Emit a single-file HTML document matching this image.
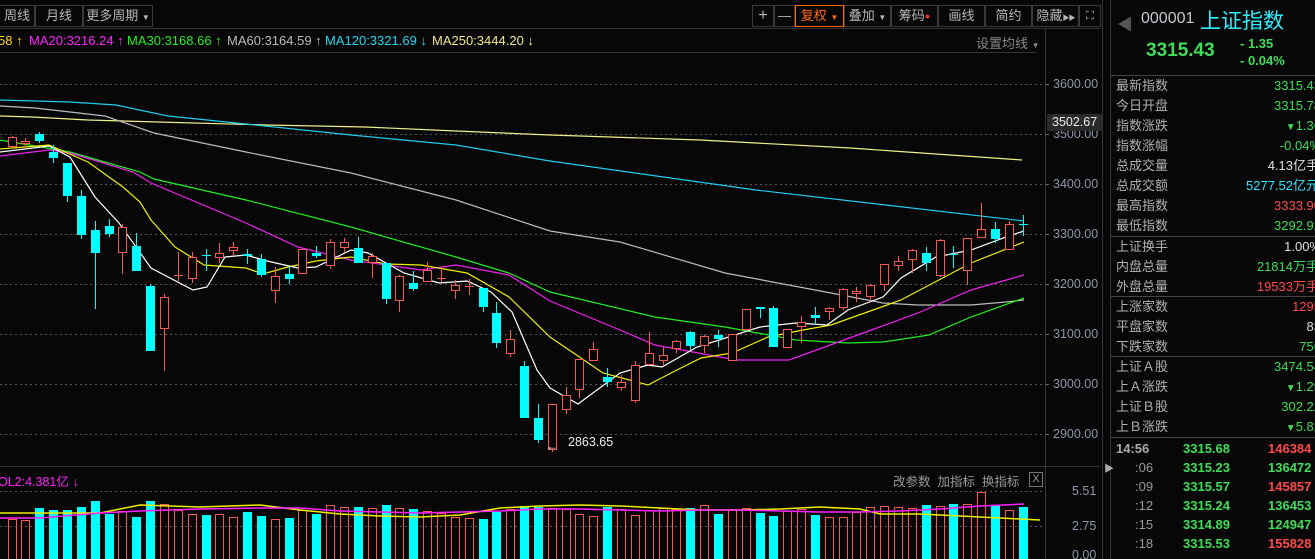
<!DOCTYPE html>
<html><head><meta charset="utf-8"><style>
*{margin:0;padding:0;box-sizing:border-box}
html,body{width:1315px;height:559px;overflow:hidden}
body{background:#070707;font-family:"Liberation Sans","Noto Sans CJK SC",sans-serif;position:relative;color:#aaa}
.a{position:absolute;white-space:nowrap}
.btn{position:absolute;top:5px;height:22px;border:1px solid #3a3a3a;color:#b8b8b8;font-size:13px;line-height:20px;text-align:center;white-space:nowrap;overflow:hidden}
.lab{position:absolute;left:1116px;font-size:13px;color:#b0b0b0;line-height:20px}
.val{position:absolute;right:-6px;font-size:13px;line-height:20px;text-align:right}
.g{color:#3fdc5a}.r{color:#ff4a4a}.w{color:#e0e0e0}.c{color:#2fe6ff}
.tk{position:absolute;font-size:13px;line-height:19px;font-weight:bold}
</style></head><body>
<svg class="a" style="left:0;top:0" width="1315" height="559" id="s">
<g stroke="#555" stroke-width="1" stroke-dasharray="2,3">
<line x1="0" y1="84.5" x2="1045" y2="84.5"/><line x1="0" y1="134.5" x2="1045" y2="134.5"/><line x1="0" y1="184.5" x2="1045" y2="184.5"/><line x1="0" y1="234.5" x2="1045" y2="234.5"/><line x1="0" y1="284.5" x2="1045" y2="284.5"/><line x1="0" y1="334.5" x2="1045" y2="334.5"/><line x1="0" y1="384.5" x2="1045" y2="384.5"/><line x1="0" y1="434.5" x2="1045" y2="434.5"/>
<line x1="0" y1="491.5" x2="1045" y2="491.5"/><line x1="0" y1="526.5" x2="1045" y2="526.5"/>
</g>
<line x1="0" y1="28.5" x2="1100" y2="28.5" stroke="#333"/>
<line x1="0" y1="52.5" x2="1036" y2="52.5" stroke="#333"/>
<line x1="0" y1="466.5" x2="1100" y2="466.5" stroke="#333"/>
<line x1="1045.5" y1="29" x2="1045.5" y2="559" stroke="#333"/>
<line x1="1102.5" y1="0" x2="1102.5" y2="559" stroke="#333"/>
<line x1="1110.5" y1="0" x2="1110.5" y2="559" stroke="#333"/>
<g stroke="#666"><line x1="1045" y1="84.5" x2="1049" y2="84.5"/><line x1="1045" y1="134.5" x2="1049" y2="134.5"/><line x1="1045" y1="184.5" x2="1049" y2="184.5"/><line x1="1045" y1="234.5" x2="1049" y2="234.5"/><line x1="1045" y1="284.5" x2="1049" y2="284.5"/><line x1="1045" y1="334.5" x2="1049" y2="334.5"/><line x1="1045" y1="384.5" x2="1049" y2="384.5"/><line x1="1045" y1="434.5" x2="1049" y2="434.5"/></g>
<g fill="none" stroke-width="1.2">
<polyline stroke="#f0f08a" points="0,116 32,117 88,120 158,122 267,125 365,127 456,131 550,135 700,140 850,148 1022,160"/>
<polyline stroke="#22ccee" points="0,100 70,102 116,105 168,116 246,124 351,135 456,145 550,161 756,190 1024,221"/>
<polyline stroke="#bbbbbb" points="0,106 35,108 105,116 154,133 246,152 351,173 456,200 550,231 620,242 725,273 831,293 883,303 918,305 971,305 1006,302 1024,300"/>
<polyline stroke="#22ee22" points="0,140 70,152 140,172 154,179 246,200 351,227 456,257 509,273 550,292 655,317 725,327 796,340 848,343 883,342 929,335 971,317 1024,298"/>
<polyline stroke="#ee22ee" points="0,156 49,150 70,153 133,172 151,183 246,223 298,247 351,260 421,270 456,265 509,275 550,301 620,330 655,345 736,360 789,360 866,332 918,313 971,290 1024,275"/>
<polyline stroke="#eeee00" points="0,149 49,145 88,162 123,187 140,202 151,220 175,247 204,265 246,268 263,274 288,267 316,261 351,257 386,264 421,265 467,273 509,297 550,337 603,373 648,385 673,372 701,358 732,353 768,337 803,330 831,325 901,300 971,263 1024,242"/>
<polyline stroke="#ffffff" points="0,152 49,146 70,157 95,197 119,223 151,268 193,290 207,287 225,257 246,255 267,261 298,268 316,267 351,250 368,253 404,273 439,283 467,281 491,292 512,312 537,370 550,388 578,404 620,373 648,365 662,367 697,347 760,327 796,323 827,325 848,310 883,297 901,278 936,257 971,250 1006,237 1024,231"/>
</g>
<g id="cd"></g><g id="vol"></g>
<g fill="none" stroke-width="1.5">
<polyline stroke="#eeee00" points="0,513 40,513 100,513 140,505 200,507 260,505 300,510 340,514 380,516 420,517 460,515 500,508 540,506 580,505 620,506 660,508 700,510 740,510 780,509 820,507 860,509 880,514 920,514 960,516 1000,518 1040,520"/>
<polyline stroke="#ff22ff" points="0,518 40,518 100,513 140,511 200,509 260,508 300,508 340,511 380,512 420,513 460,512 500,511 540,509 580,509 620,510 660,511 700,510 740,510 780,511 820,512 860,512 900,511 940,509 980,506 1024,504"/>
</g>
<text x="546" y="450" fill="#eee" font-size="12" font-family="Liberation Sans">←</text>
<text x="568" y="446" fill="#eee" font-size="12.5" font-family="Liberation Sans">2863.65</text>
</svg>
<script>
var C=[[1,137,147,136,148],[1,141,144,138,147],[0,134,141,132,143],[0,152,158,145,163],[0,163,196,163,202],[0,196,235,190,239],[0,230,253,221,309],[0,226,234,219,237],[1,227,253,224,274],[0,246,271,233,271],[0,286,351,284,351],[1,297,329,294,371],[1,275,275,252,281],[1,257,279,252,283],[0,255,255,249,271],[1,253,258,243,263],[1,247,251,242,256],[0,254,256,249,264],[0,259,275,254,277],[1,276,291,267,303],[0,274,279,267,284],[1,249,274,249,274],[0,253,256,246,258],[1,242,266,239,269],[1,242,248,238,253],[0,248,263,237,263],[1,256,263,253,278],[0,263,299,263,304],[1,276,301,275,312],[0,283,289,271,291],[1,270,282,262,282],[1,278,278,267,282],[1,285,291,280,299],[1,286,286,279,295],[0,288,307,288,312],[0,313,343,302,348],[1,339,354,330,357],[0,366,418,361,418],[0,418,440,404,443],[1,404,450,404,452],[1,395,410,387,414],[1,359,390,359,398],[1,349,361,342,361],[0,377,382,368,387],[1,382,388,375,391],[1,365,401,361,403],[1,353,365,332,365],[1,355,361,347,366],[1,341,349,340,353],[0,332,346,331,350],[1,336,346,335,353],[0,335,339,330,347],[1,334,361,334,361],[1,309,330,309,330],[0,307,309,307,318],[0,308,347,306,347],[1,329,348,329,348],[1,322,327,316,343],[0,315,318,307,325],[1,308,312,307,320],[1,289,308,288,310],[1,291,294,287,302],[1,285,297,284,301],[1,264,285,264,291],[1,261,266,256,271],[1,250,260,249,273],[0,253,263,247,271],[1,240,276,239,277],[0,254,254,246,268],[1,238,271,238,285],[1,229,238,203,238],[0,229,239,222,243],[1,224,250,221,250],[0,224,224,215,236]];
var V=[519,520,508,510,510,507,501,514,511,517,501,504,510,514,515,514,517,512,516,519,518,510,514,505,507,507,508,505,508,509,511,513,517,518,519,512,509,506,507,508,509,514,516,507,509,515,510,508,509,508,505,514,509,508,513,516,511,509,515,517,517,512,507,506,507,508,505,506,504,504,492,505,510,507];
var ns="http://www.w3.org/2000/svg",cd=document.getElementById('cd'),vo=document.getElementById('vol');
function el(p,t,a){var e=document.createElementNS(ns,t);for(var k in a)e.setAttribute(k,a[k]);p.appendChild(e);}
C.forEach(function(c,i){var x=Math.round(11.6+i*13.85),col=c[0]?'#f65a50':'#00ffff';
el(cd,'line',{x1:x+.5,x2:x+.5,y1:c[3],y2:c[4],stroke:col});
if(c[2]-c[1]<1){el(cd,'line',{x1:x-4,x2:x+5,y1:c[1]+.5,y2:c[1]+.5,stroke:col});}
else if(c[0]){el(cd,'rect',{x:x-3.5,y:c[1]+.5,width:8,height:c[2]-c[1]-1,fill:'#070707',stroke:col});}
else{el(cd,'rect',{x:x-4,y:c[1],width:9,height:c[2]-c[1],fill:col});}
var t=V[i];if(c[0])el(vo,'rect',{x:x-3.5,y:t+.5,width:8,height:559-t,fill:'none',stroke:'#f65a50'});else el(vo,'rect',{x:x-4,y:t,width:9,height:559-t,fill:'#00ffff'});
});
</script>
<div class="btn" style="left:-1px;width:36px">周线</div>
<div class="btn" style="left:35px;width:48px">月线</div>
<div class="btn" style="left:83px;width:70px">更多周期 <span style="font-size:8px">▼</span></div>
<div class="btn" style="left:752px;width:22px;font-size:16px">+</div>
<div class="btn" style="left:774px;width:21px">—</div>
<div class="btn" style="left:795px;width:49px;border-color:#ff6a00;color:#ff6a1a">复权 <span style="font-size:8px">▼</span></div>
<div class="btn" style="left:844px;width:47px">叠加 <span style="font-size:8px">▼</span></div>
<div class="btn" style="left:891px;width:47px">筹码<span style="color:#ff3030;font-size:9px;vertical-align:top">●</span></div>
<div class="btn" style="left:938px;width:47px">画线</div>
<div class="btn" style="left:985px;width:47px">简约</div>
<div class="btn" style="left:1032px;width:47px">隐藏<span style="font-size:7px;letter-spacing:-1px">▶▶</span></div>
<div class="btn" style="left:1079px;width:22px;font-size:11px">⛶</div>
<div class="a" style="left:0;top:33px;font-size:13px;line-height:16px">
<span style="color:#ffd700;position:absolute;left:-2px">58 ↑</span>
<span style="color:#ff22ff;position:absolute;left:29px">MA20:3216.24 ↑</span>
<span style="color:#22ee22;position:absolute;left:127px">MA30:3168.66 ↑</span>
<span style="color:#bbb;position:absolute;left:227px">MA60:3164.59 ↑</span>
<span style="color:#22d8f0;position:absolute;left:325px">MA120:3321.69 ↓</span>
<span style="color:#f0e890;position:absolute;left:432px">MA250:3444.20 ↓</span>
</div>
<div class="a" style="left:976px;top:33px;font-size:13px;color:#888">设置均线 <span style="font-size:8px">▼</span></div>
<div class="a" style="left:1053px;top:76px;font-size:12.5px;color:#8d97a8;line-height:16px">3600.00</div>
<div class="a" style="left:1053px;top:126px;font-size:12.5px;color:#8d97a8;line-height:16px">3500.00</div>
<div class="a" style="left:1047px;top:114px;width:55px;height:17px;background:#2a2a2a;font-size:12.5px;color:#eee;line-height:17px;padding-left:5px">3502.67</div>
<div class="a" style="left:1053px;top:176px;font-size:12.5px;color:#8d97a8;line-height:16px">3400.00</div>
<div class="a" style="left:1053px;top:226px;font-size:12.5px;color:#8d97a8;line-height:16px">3300.00</div>
<div class="a" style="left:1053px;top:276px;font-size:12.5px;color:#8d97a8;line-height:16px">3200.00</div>
<div class="a" style="left:1053px;top:326px;font-size:12.5px;color:#8d97a8;line-height:16px">3100.00</div>
<div class="a" style="left:1053px;top:376px;font-size:12.5px;color:#8d97a8;line-height:16px">3000.00</div>
<div class="a" style="left:1053px;top:426px;font-size:12.5px;color:#8d97a8;line-height:16px">2900.00</div>
<div class="a" style="left:1072px;top:483px;font-size:12.5px;color:#8d97a8;line-height:16px">5.51</div>
<div class="a" style="left:1072px;top:518px;font-size:12.5px;color:#8d97a8;line-height:16px">2.75</div>
<div class="a" style="left:1072px;top:547px;font-size:12.5px;color:#8d97a8;line-height:16px">0.00</div>
<div class="a" style="left:-2px;top:471px;font-size:12.5px;color:#ff22ff">OL2:4.381亿 ↓</div>
<div class="a" style="left:893px;top:471px;font-size:12.5px;color:#999">改参数&nbsp; 加指标&nbsp; 换指标</div>
<div class="a" style="left:1029px;top:472px;width:14px;height:15px;border:1px solid #777;color:#999;font-size:11px;line-height:13px;text-align:center">X</div>
<div class="a" style="left:1117px;top:11px;font-size:16px;color:#555">◀</div>
<div class="a" style="left:1141px;top:10px;font-size:16px;color:#c8c8d0">000001</div>
<div class="a" style="left:1200px;top:5px;font-size:21px;color:#2ff0ff">上证指数</div>
<div class="a" style="left:1146px;top:40px;font-size:19px;font-weight:bold;color:#3fdc5a">3315.43</div>
<div class="a" style="left:1240px;top:36px;font-size:13px;font-weight:bold;color:#3fdc5a">- 1.35</div>
<div class="a" style="left:1240px;top:53px;font-size:13px;font-weight:bold;color:#3fdc5a">- 0.04%</div>
<div class="a" style="left:1111px;top:75px;width:204px;height:1px;background:#444"></div>
<div class="a" style="left:1111px;top:236px;width:204px;height:1px;background:#444"></div>
<div class="a" style="left:1111px;top:296px;width:204px;height:1px;background:#444"></div>
<div class="a" style="left:1111px;top:356px;width:204px;height:1px;background:#444"></div>
<div class="a" style="left:1111px;top:437px;width:204px;height:1px;background:#444"></div>
<div class="a" style="left:1104px;top:460px;font-size:10px;color:#aaa">▶</div>
<div class="lab" style="top:76px">最新指数</div><div class="val g" style="top:76px">3315.43</div>
<div class="lab" style="top:96px">今日开盘</div><div class="val g" style="top:96px">3315.78</div>
<div class="lab" style="top:116px">指数涨跌</div><div class="val g" style="top:116px"><span style="font-size:10px">▼</span>1.36</div>
<div class="lab" style="top:136px">指数涨幅</div><div class="val g" style="top:136px">-0.04%</div>
<div class="lab" style="top:156px">总成交量</div><div class="val w" style="top:156px;right:-4px">4.13亿手</div>
<div class="lab" style="top:176px">总成交额</div><div class="val c" style="top:176px;right:-4px">5277.52亿元</div>
<div class="lab" style="top:196px">最高指数</div><div class="val r" style="top:196px">3333.90</div>
<div class="lab" style="top:216px">最低指数</div><div class="val g" style="top:216px">3292.92</div>
<div class="lab" style="top:237px">上证换手</div><div class="val w" style="top:237px">1.00%</div>
<div class="lab" style="top:257px">内盘总量</div><div class="val g" style="top:257px;right:-4px">21814万手</div>
<div class="lab" style="top:277px">外盘总量</div><div class="val r" style="top:277px;right:-4px">19533万手</div>
<div class="lab" style="top:297px">上涨家数</div><div class="val r" style="top:297px">1295</div>
<div class="lab" style="top:317px">平盘家数</div><div class="val w" style="top:317px">83</div>
<div class="lab" style="top:337px">下跌家数</div><div class="val g" style="top:337px">756</div>
<div class="lab" style="top:357px">上证Ａ股</div><div class="val g" style="top:357px">3474.54</div>
<div class="lab" style="top:377px">上Ａ涨跌</div><div class="val g" style="top:377px"><span style="font-size:10px">▼</span>1.29</div>
<div class="lab" style="top:397px">上证Ｂ股</div><div class="val g" style="top:397px">302.22</div>
<div class="lab" style="top:417px">上Ｂ涨跌</div><div class="val g" style="top:417px"><span style="font-size:10px">▼</span>5.82</div>
<div class="tk" style="left:1116px;top:439px;color:#aaa">14:56</div>
<div class="tk" style="left:1135px;top:458px;color:#999;font-weight:normal">:06</div>
<div class="tk" style="left:1135px;top:477px;color:#999;font-weight:normal">:09</div>
<div class="tk" style="left:1135px;top:496px;color:#999;font-weight:normal">:12</div>
<div class="tk" style="left:1135px;top:515px;color:#999;font-weight:normal">:15</div>
<div class="tk" style="left:1135px;top:534px;color:#999;font-weight:normal">:18</div>
<div class="tk g" style="left:1183px;top:439px">3315.68</div><div class="tk r" style="left:1268px;top:439px">146384</div>
<div class="tk g" style="left:1183px;top:458px">3315.23</div><div class="tk g" style="left:1268px;top:458px">136472</div>
<div class="tk g" style="left:1183px;top:477px">3315.57</div><div class="tk r" style="left:1268px;top:477px">145857</div>
<div class="tk g" style="left:1183px;top:496px">3315.24</div><div class="tk g" style="left:1268px;top:496px">136453</div>
<div class="tk g" style="left:1183px;top:515px">3314.89</div><div class="tk g" style="left:1268px;top:515px">124947</div>
<div class="tk g" style="left:1183px;top:534px">3315.53</div><div class="tk r" style="left:1268px;top:534px">155828</div>
</body></html>
